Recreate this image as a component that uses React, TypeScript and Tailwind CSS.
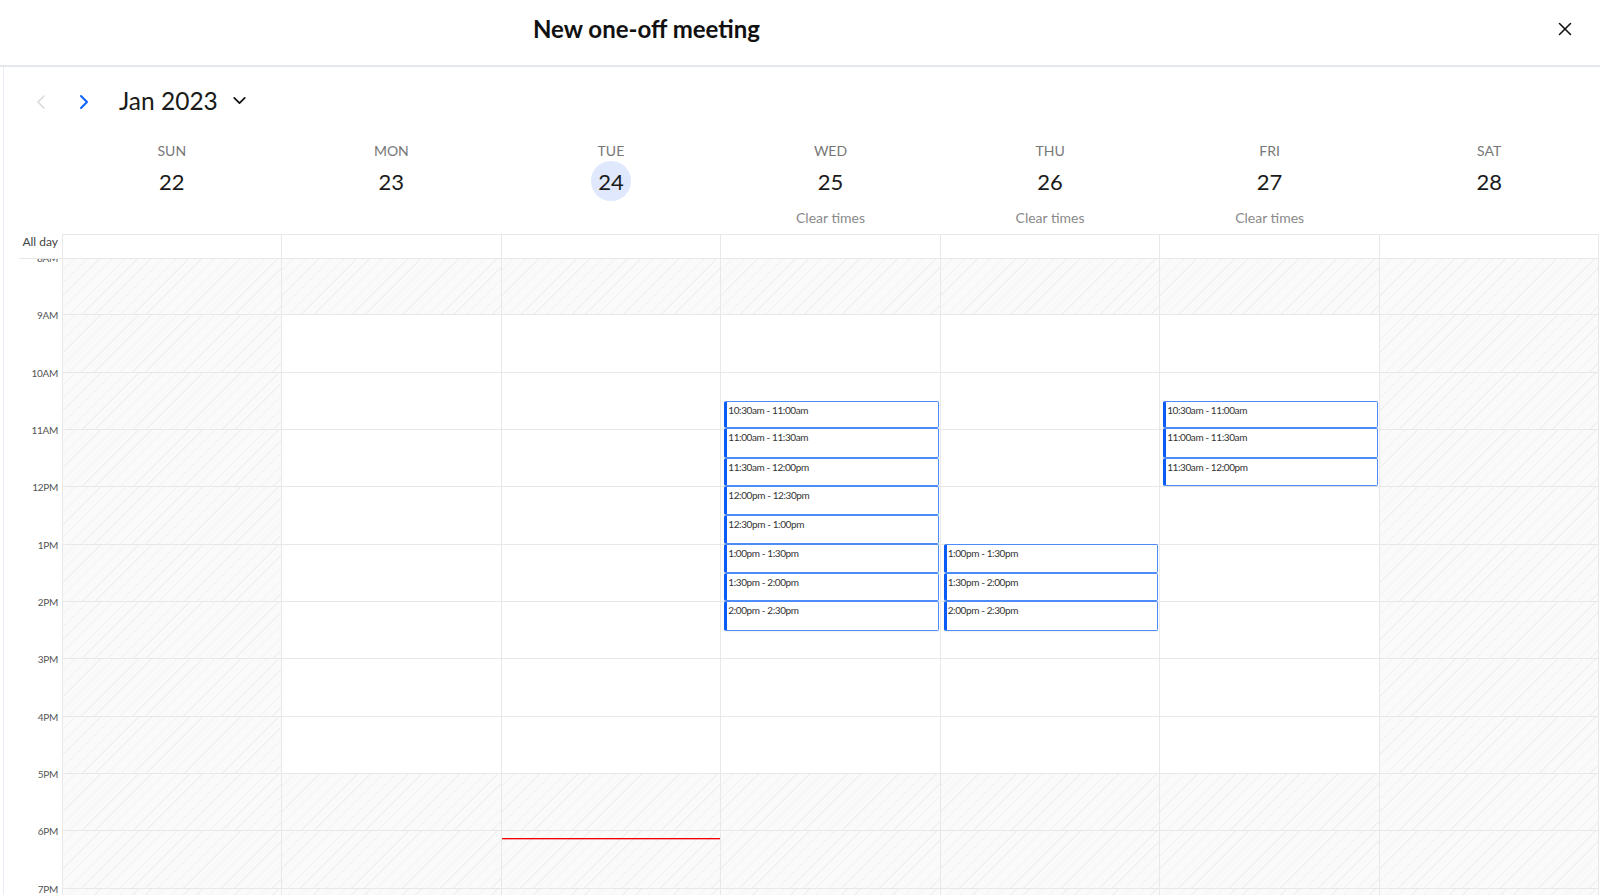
import React from "react";
import { ChevronDown, ChevronLeft, ChevronRight, X } from "lucide-react";

const HOURS = ["8AM", "9AM", "10AM", "11AM", "12PM", "1PM", "2PM", "3PM", "4PM", "5PM", "6PM", "7PM"];

const SLOTS = [
  { label: "10:30am - 11:00am", height: 27 },
  { label: "11:00am - 11:30am", height: 30 },
  { label: "11:30am - 12:00pm", height: 28 },
  { label: "12:00pm - 12:30pm", height: 29 },
  { label: "12:30pm - 1:00pm", height: 29 },
  { label: "1:00pm - 1:30pm", height: 29 },
  { label: "1:30pm - 2:00pm", height: 28 },
  { label: "2:00pm - 2:30pm", height: 30 },
];

const DAYS = [
  { name: "SUN", date: 22, open: false, slots: [], offset: 0 },
  { name: "MON", date: 23, open: true, slots: [], offset: 0 },
  { name: "TUE", date: 24, open: true, today: true, slots: [], offset: 0 },
  { name: "WED", date: 25, open: true, slots: SLOTS, offset: 143 },
  { name: "THU", date: 26, open: true, slots: SLOTS.slice(5), offset: 286 },
  { name: "FRI", date: 27, open: true, slots: SLOTS.slice(0, 3), offset: 143 },
  { name: "SAT", date: 28, open: false, slots: [], offset: 0 },
];

const hatch =
  "bg-[repeating-linear-gradient(135deg,#fafafa_0px,#fafafa_8px,#f1f1f1_8px,#f1f1f1_9px)]";

const App = () => {
  return (
    <div className="flex h-[895px] w-[1600px] flex-col overflow-hidden bg-white font-['Lato',sans-serif] text-[#1a1a1a]">
      <header className="flex h-[67px] shrink-0 items-start justify-between border-b-2 border-[#e4e7eb] pl-[533px] pr-[24px]">
        <h1 className="mt-[12px] text-[24px] font-bold leading-[34px] text-[#111]">New one-off meeting</h1>
        <X className="mt-[18px]" size={22} strokeWidth={1.7} color="#111" />
      </header>

      <div className="ml-[3px] flex min-h-0 flex-1 flex-col border-l border-[#e8edf5]">
        <div className="flex h-[67px] shrink-0 items-center pl-[25px]">
          <ChevronLeft className="mt-[3px]" size={24} strokeWidth={1.6} color="#dadada" />
          <ChevronRight className="ml-[19px] mt-[3px]" size={24} strokeWidth={2} color="#0f62fe" />
          <span className="ml-[23px] text-[24.5px] leading-[32px]">Jan 2023</span>
          <ChevronDown className="ml-[11px]" size={21} strokeWidth={2} color="#111" />
        </div>

        <div className="ml-[58px] mr-[1px] grid h-[100px] shrink-0 grid-cols-7">
          {DAYS.map((day) => (
            <div key={day.name} className="flex flex-col items-center">
              <span className="mt-[7px] text-[14px] leading-[20px] text-[#777]">{day.name}</span>
              <span
                className={`flex h-[40px] w-[40px] items-center justify-center rounded-full text-[22px] ${day.today ? "bg-[#dfe8fd]" : ""}`}
              >
                {day.date}
              </span>
              {day.slots.length > 0 && (
                <span className="mt-[7px] text-[14px] leading-[20px] text-[#8a8a8a]">Clear times</span>
              )}
            </div>
          ))}
        </div>

        <div className="relative z-10 -mb-px flex h-[25px] shrink-0">
          <div className="ml-[15px] flex w-[43px] items-center justify-end border-b border-[#e8e8e8] pb-[8px] pr-[4px] text-[12px] whitespace-nowrap text-[#444]">
            All day
          </div>
          <div className="mr-[1px] grid flex-1 grid-cols-7 border-y border-r border-[#e8e8e8]">
            {DAYS.map((day) => (
              <div key={day.name} className="border-l border-[#e8e8e8]" />
            ))}
          </div>
        </div>

        <div className="flex min-h-0 flex-1 overflow-hidden">
          <div className="w-[58px] shrink-0">
            {HOURS.map((hour) => (
              <div key={hour} className="h-[57.33px] pr-[4px] text-right">
                <span className="block -translate-y-[7px] text-[10px] leading-[14px] tracking-[-0.3px] text-[#555]">
                  {hour}
                </span>
              </div>
            ))}
          </div>
          <div className="mr-[1px] grid flex-1 grid-cols-7 border-r border-[#e8e8e8]">
            {DAYS.map((day) => (
              <div key={day.name} className="relative border-l border-[#e8e8e8]">
                {HOURS.map((hour, i) => (
                  <div
                    key={hour}
                    className={`h-[57.33px] border-b border-[#e8e8e8] ${!day.open || i === 0 || i >= 9 ? hatch : "bg-white"}`}
                  />
                ))}
                {day.slots.length > 0 && (
                  <div className="absolute left-[3px] right-[1px] flex flex-col" style={{ top: day.offset }}>
                    {day.slots.map((slot) => (
                      <div
                        key={slot.label}
                        className="rounded-[2px] border border-l-[3px] border-[#4d8bf8] border-l-[#0b5cf5] bg-white pl-[1px] pt-[1px] text-[10px] leading-[14px] tracking-[-0.4px] text-[#333] shadow-[0_1px_2px_rgba(0,0,0,0.06)]"
                        style={{ height: slot.height }}
                      >
                        {slot.label}
                      </div>
                    ))}
                  </div>
                )}
                {day.today && (
                  <div className="absolute inset-x-0 top-[580px] h-px bg-[#ee0000] shadow-[0_1px_0_rgba(238,0,0,0.35)]" />
                )}
              </div>
            ))}
          </div>
        </div>
      </div>
    </div>
  );
};

export default App;
